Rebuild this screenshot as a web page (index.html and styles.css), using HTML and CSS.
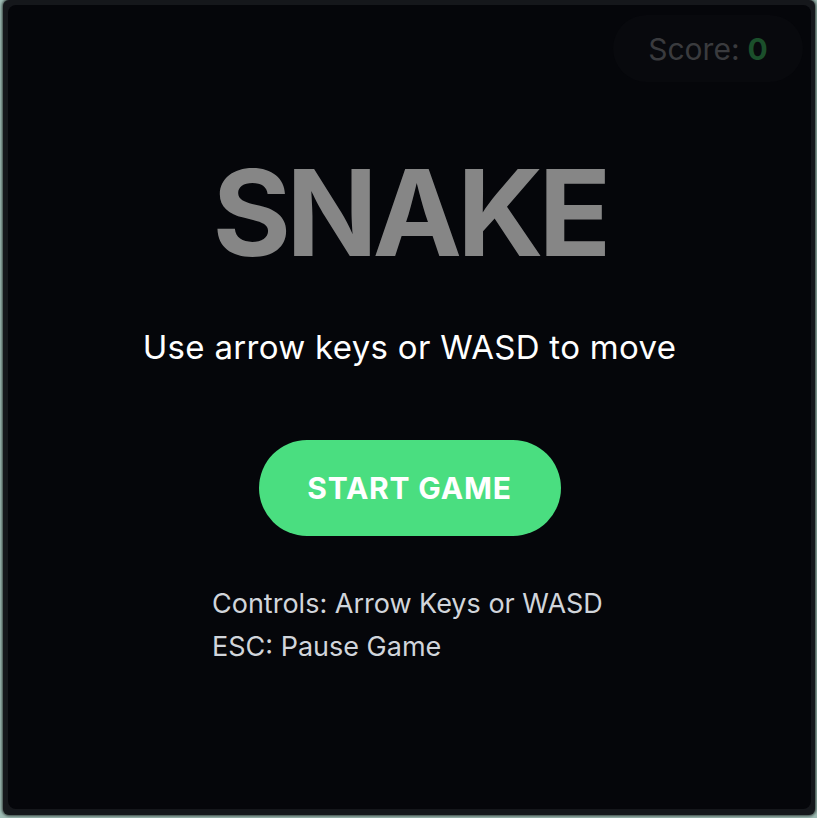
FILE: index.html
```html
<!DOCTYPE html>
<html>
<head>
<meta charset="utf-8">
<link rel="stylesheet" href="styles.css">
</head>
<body>
<div class="frame">
  <div class="game">
    <div class="score">Score: <span class="score-value">0</span></div>
    <h1 class="title">SNAKE</h1>
    <p class="subtitle">Use arrow keys or WASD to move</p>
    <button class="start">START GAME</button>
    <div class="controls">
      <div>Controls: Arrow Keys or WASD</div>
      <div>ESC: Pause Game</div>
    </div>
  </div>
</div>
</body>
</html>
```

FILE: styles.css
```css
html, body {
  margin: 0;
  padding: 0;
}
body {
  width: 817px;
  height: 818px;
  background: #9fbdb5;
  font-family: Inter, "Noto Sans", sans-serif;
  overflow: hidden;
}
.frame {
  box-sizing: border-box;
  width: 812px;
  height: 815px;
  margin-left: 3px;
  background: #15171b;
  border-radius: 6px;
  padding: 5px 4px 6px 5px;
  box-shadow: 0 0 3px 1px rgba(0,0,0,0.7);
}
.game {
  position: relative;
  box-sizing: border-box;
  height: 100%;
  background: #05060a;
  border-radius: 8px;
  display: flex;
  flex-direction: column;
  align-items: center;
}
.score {
  position: absolute;
  top: 10px;
  right: 8px;
  width: 190px;
  height: 67px;
  border-radius: 34px;
  background: #08090d;
  color: #3a3b3e;
  font-size: 30px;
  display: flex;
  align-items: center;
  justify-content: center;
}
.score-value {
  color: #1b4f2b;
  font-weight: 700;
  margin-left: 8px;
}
.title {
  margin: 148px 0 0;
  font-size: 120px;
  line-height: 120px;
  font-weight: 700;
  color: #868686;
  letter-spacing: -5px;
}
.subtitle {
  margin: 54px 0 0;
  font-size: 33px;
  line-height: 40px;
  color: #ffffff;
  letter-spacing: 0.3px;
}
.start {
  margin-top: 73px;
  width: 302px;
  height: 96px;
  border: none;
  border-radius: 48px;
  background: #4ade80;
  color: #ffffff;
  font-family: Inter, "Noto Sans", sans-serif;
  font-size: 30px;
  font-weight: 700;
  letter-spacing: 0.8px;
  padding: 0;
}
.controls {
  margin-top: 46px;
  align-self: flex-start;
  margin-left: 204px;
  font-size: 27px;
  line-height: 43px;
  color: #d1d5db;
}
```
